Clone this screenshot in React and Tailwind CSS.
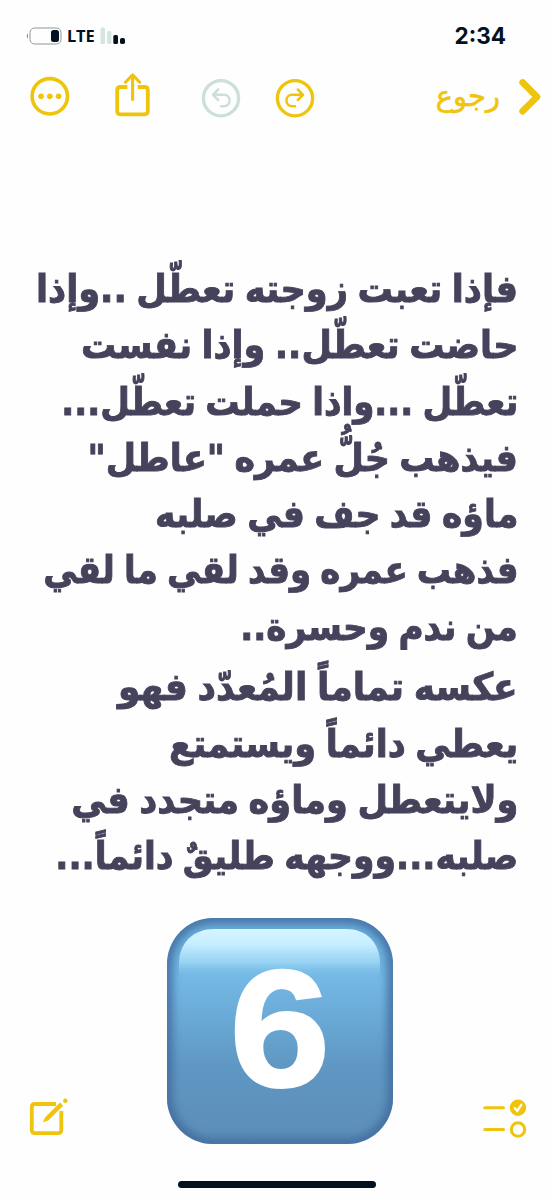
const paragraphs = [
  [
    { text: "فإذا تعبت زوجته تعطّل ..وإذا", scale: "scale-x-[0.927]" },
    { text: "حاضت تعطّل.. وإذا نفست", scale: "scale-x-[0.922]" },
    { text: "تعطّل ...واذا حملت تعطّل...", scale: "scale-x-[0.899]" },
    { text: "فيذهب جُلُّ عمره \"عاطل\"", scale: "scale-x-[0.92]" },
    { text: "ماؤه قد جف في صلبه", scale: "scale-x-[0.912]" },
    { text: "فذهب عمره وقد لقي ما لقي", scale: "scale-x-[0.896]" },
    { text: "من ندم وحسرة..", scale: "scale-x-[0.905]" },
  ],
  [
    { text: "عكسه تماماً المُعدّد فهو", scale: "scale-x-[0.948]" },
    { text: "يعطي دائماً ويستمتع", scale: "scale-x-[0.926]" },
    { text: "ولايتعطل وماؤه متجدد في", scale: "scale-x-[0.925]" },
    { text: "صلبه...ووجهه طليقٌ دائماً...", scale: "scale-x-[0.911]" },
  ],
];

function StatusBar() {
  return (
    <div className="flex h-[72px] items-start justify-between pl-[26px] pr-[48px] pt-[24px]">
      <div dir="ltr" className="flex h-[24px] items-center">
        <svg width="36" height="18" viewBox="0 0 36 18" fill="none">
          <path d="M2 6.5C.2 7.5.2 10.5 2 11.5Z" fill="#8b9798" />
          <rect x="4" y="1" width="31" height="16" rx="4.5" stroke="#8b9798" strokeWidth="1" />
          <rect x="25" y="3" width="8" height="12" rx="2.5" fill="#04121f" />
        </svg>
        <span className="ml-[5px] w-[29px] whitespace-nowrap font-['Noto_Sans'] text-[16.5px] font-bold leading-[22px] text-[#04121f]">LTE</span>
        <svg className="ml-[4px]" width="26" height="18" viewBox="0 0 26 18">
          <rect x="0.5" y="0.5" width="4.5" height="16.5" rx="1.5" fill="#d5e6e2" />
          <rect x="7" y="4" width="4.5" height="13" rx="1.5" fill="#d5e6e2" />
          <rect x="13.3" y="8" width="4.7" height="9" rx="1.5" fill="#04121f" />
          <rect x="20" y="11" width="5" height="6" rx="1.8" fill="#04121f" />
        </svg>
      </div>
      <span className="font-[Inter,sans-serif] text-[22.5px] font-bold leading-[24px] text-[#04121f]">2:34</span>
    </div>
  );
}

function Toolbar() {
  return (
    <div dir="ltr" className="flex h-[54px] items-start pl-[30px] text-[#efc40d]">
      <svg className="mt-[4px]" width="40" height="40" viewBox="0 0 40 40" fill="none" stroke="currentColor" strokeWidth="3.6">
        <circle cx="19.8" cy="20.3" r="17.7" />
        <g fill="currentColor" stroke="none">
          <circle cx="11" cy="20.3" r="2.8" />
          <circle cx="19.8" cy="20.3" r="2.8" />
          <circle cx="28.6" cy="20.3" r="2.8" />
        </g>
      </svg>
      <svg className="ml-[44px]" width="38" height="46" viewBox="0 0 38 46" fill="none" stroke="currentColor" strokeWidth="3.8" strokeLinecap="round" strokeLinejoin="round">
        <path d="M13.3 15H6.5C4.3 15 3.2 16.1 3.2 18.3V39C3.2 41.2 4.3 42.3 6.5 42.3H30.5C32.7 42.3 33.8 41.2 33.8 39V18.3C33.8 16.1 32.7 15 30.5 15H23.8" strokeLinecap="butt" />
        <path d="M18.6 27.5V3.5M11.5 10.2L18.6 2.8L25.7 10.2" strokeWidth="3.1" />
      </svg>
      <svg className="ml-[49px] mt-[6px] text-[#cddfdb]" width="40" height="40" viewBox="0 0 40 40" fill="none" stroke="currentColor" strokeLinecap="round" strokeLinejoin="round">
        <circle cx="20" cy="20.2" r="17.6" strokeWidth="3.3" />
        <path d="M17.2 11.5L12 16.8L17.2 22M12.5 16.8H22.8C30.5 16.8 30.5 28.2 22.8 28.2H20" strokeWidth="2.5" />
      </svg>
      <svg className="ml-[34px] mt-[6px]" width="40" height="40" viewBox="0 0 40 40" fill="none" stroke="currentColor" strokeLinecap="round" strokeLinejoin="round">
        <circle cx="20" cy="20.2" r="17.6" strokeWidth="3.3" />
        <path d="M22.8 11.5L28 16.8L22.8 22M27.5 16.8H17.2C9.5 16.8 9.5 28.2 17.2 28.2H20" strokeWidth="2.5" />
      </svg>
      <div className="ml-auto flex items-start">
        <span dir="rtl" className="mt-[4px] whitespace-nowrap font-['DejaVu_Sans',sans-serif] text-[29px] leading-[40px] [-webkit-text-stroke:0.6px_currentColor]">رجوع</span>
        <svg className="ml-[18px] mr-[12px] mt-[6px]" width="24" height="38" viewBox="0 0 24 38" fill="none" stroke="currentColor" strokeWidth="6.6" strokeLinecap="round">
          <path d="M4.6 4.4L19 18.8L4.6 33.2" strokeLinejoin="round" />
        </svg>
      </div>
    </div>
  );
}

function KeycapSix() {
  return (
    <svg width="226" height="226" viewBox="0 0 226 226">
      <defs>
        <linearGradient id="face" x1="0" y1="0" x2="0" y2="1">
          <stop offset="0" stopColor="#68addb" />
          <stop offset="0.28" stopColor="#73b7e4" />
          <stop offset="0.65" stopColor="#5f98c3" />
          <stop offset="1" stopColor="#5c8db8" />
        </linearGradient>
        <linearGradient id="gloss" x1="0" y1="0" x2="0" y2="1">
          <stop offset="0" stopColor="#d6f5ff" />
          <stop offset="0.3" stopColor="#c6eeff" />
          <stop offset="0.65" stopColor="#a3dcf8" stopOpacity="0.8" />
          <stop offset="1" stopColor="#77bce8" stopOpacity="0" />
        </linearGradient>
        <clipPath id="cap"><rect width="226" height="226" rx="46" /></clipPath>
        <filter id="soft"><feGaussianBlur stdDeviation="5" /></filter>
      </defs>
      <g clipPath="url(#cap)">
        <rect width="226" height="226" fill="url(#face)" />
        <rect width="226" height="226" rx="46" fill="none" stroke="#416b9d" strokeWidth="10" filter="url(#soft)" />
        <path d="M12 62V46C12 24 27 11 47 11H179C199 11 213 24 213 46V62Z" fill="url(#gloss)" />
      </g>
      <text x="101" y="168" transform="translate(112.8 0) scale(1.09 1) translate(-101 0)" textAnchor="middle" strokeWidth="2" className="fill-white stroke-white font-['Liberation_Sans',sans-serif] text-[167px] font-bold">6</text>
    </svg>
  );
}

export default function App() {
  return (
    <main dir="rtl" className="flex h-[1200px] w-[554px] flex-col overflow-hidden bg-[#fefefe]">
      <div dir="ltr"><StatusBar /></div>
      <Toolbar />
      <article className="mt-[135px] flex flex-col gap-[4.5px] pr-[36px] text-[#45425b]">
        {paragraphs.map((lines, index) => (
          <div key={index}>
            {lines.map((line) => (
              <p key={line.text} className="flex h-[56.25px] items-center justify-start font-['DejaVu_Sans',sans-serif] text-[38px] font-bold leading-[56px] [word-spacing:-3px] [-webkit-text-stroke:0.9px_currentColor]">
                <span className={`block shrink-0 origin-right whitespace-nowrap ${line.scale}`}>{line.text}</span>
              </p>
            ))}
          </div>
        ))}
      </article>
      <footer dir="ltr" className="mt-auto flex h-[292px] shrink-0 flex-col items-center">
        <div className="flex w-full items-start pl-[29px] pt-[10px] text-[#efc40d]">
          <svg className="mt-[180px]" width="40" height="40" viewBox="0 0 40 40" fill="none" stroke="currentColor" strokeWidth="3.8">
            <path d="M27 6H6C3.8 6 2.8 7 2.8 9.2V32C2.8 34.2 3.8 35.2 6 35.2H28.7C31 35.2 32.3 34.2 32.3 32V13" />
            <path d="M14 24.2L16 19.4L31 4.6L34.2 7.8L19.2 22.6Z" fill="currentColor" stroke="none" />
            <circle cx="36.3" cy="2.7" r="2.2" fill="currentColor" stroke="none" />
          </svg>
          <div className="ml-[98px]"><KeycapSix /></div>
          <svg className="ml-[88px] mt-[180px]" width="46" height="42" viewBox="0 0 46 42" fill="none" stroke="currentColor" strokeWidth="3.1" strokeLinecap="round">
            <path d="M3.8 9.8H22.5M3.8 31.5H22.5" />
            <circle cx="37" cy="9.8" r="8.2" fill="currentColor" stroke="none" />
            <circle cx="37" cy="31.5" r="6.7" />
            <path d="M33.8 10.2L36.3 12.9L40.3 6.8" stroke="white" strokeWidth="2.3" />
          </svg>
        </div>
        <div className="mt-[37px] h-[7px] w-[198px] rounded-full bg-[#04121f]" />
      </footer>
    </main>
  );
}
